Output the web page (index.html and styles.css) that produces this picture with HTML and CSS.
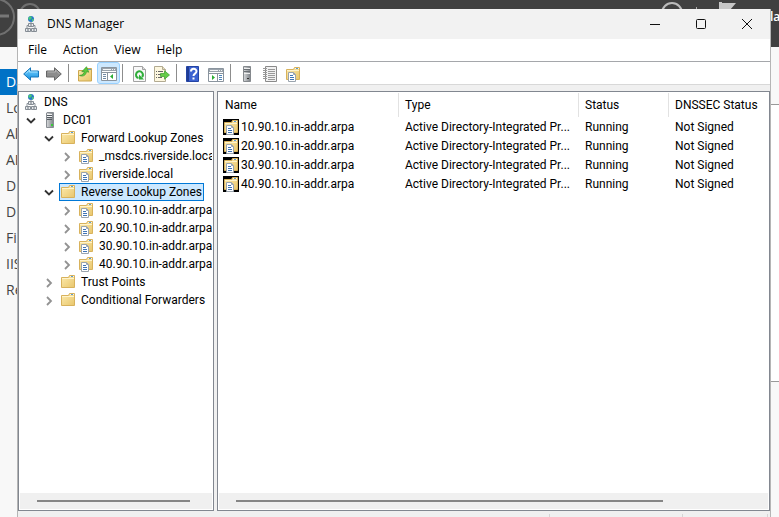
FILE: index.html
```html
<!DOCTYPE html>
<html lang="en">
<head>
<meta charset="utf-8">
<title>DNS Manager</title>
<link rel="stylesheet" href="styles.css">
</head>
<body>
<svg class="sprite" aria-hidden="true">
  <defs>
    <linearGradient id="gold" x1="0" y1="0" x2="1" y2="1"><stop offset="0" stop-color="#fdebae"/><stop offset="1" stop-color="#e8c66c"/></linearGradient>
    <linearGradient id="blue" x1="0" y1="0" x2="0" y2="1"><stop offset="0" stop-color="#7fd4ff"/><stop offset="1" stop-color="#1490e0"/></linearGradient>
    <linearGradient id="steel" x1="0" y1="0" x2="1" y2="0"><stop offset="0" stop-color="#d8dadc"/><stop offset="1" stop-color="#7b8085"/></linearGradient>
  </defs>
  <symbol id="dns" viewBox="0 0 16 16">
    <path d="M8 6v3M4 12V9.500h8V12" fill="none" stroke="#8b939b"/>
    <circle cx="8" cy="3" r="3" fill="#2878c8"/><path d="M6 1l2-1 1 2-2 2-2-1zM9 3l2 0-1 2-1 1z" fill="#48c878"/>
    <path d="M5.500 7.500h5v3h-5zM2.500 12.500h5v3h-5zM8.500 12.500h5v3h-5z" fill="#e6e9ec" stroke="#858c94"/>
    <path d="M7 9h2M4 14h2M10 14h2" stroke="#6c747c"/>
  </symbol>
  <symbol id="server" viewBox="0 0 16 16">
    <path d="M5 .5h6.500v15H4.500V1z" fill="url(#steel)" stroke="#888d92"/>
    <path d="M5 3.500h5M5 5.500h5M5 7.500h5" stroke="#555b61"/><path d="M5 2.500h5M5 4.500h5" stroke="#f4f5f6"/>
    <path d="M9 12h2v2H9z" fill="#38cc38"/>
  </symbol>
  <symbol id="server-off" viewBox="0 0 16 16">
    <path d="M4.500.5h7v15h-7z" fill="url(#steel)" stroke="#85898d"/>
    <path d="M5 3.500h6M5 5.500h6" stroke="#6a6f74"/><path d="M5 2.500h6M5 7.500h6" stroke="#eee"/><path d="M8 12h2v1H8z" fill="#333"/>
  </symbol>
  <symbol id="folder" viewBox="0 0 16 16">
    <path d="M1.500 3.500h7l1-2h5v12h-13z" fill="url(#gold)" stroke="#d8b25c"/>
    <path d="M10 2.500h4" stroke="#fff8df"/><path d="M11 2.500h2" stroke="#5b9bd5"/><path d="M2 4.500h12" stroke="#fff4cc"/>
  </symbol>
  <symbol id="zone" viewBox="0 0 16 16">
    <path d="M1.500 3.500h7l1-2h5v12h-13z" fill="url(#gold)" stroke="#d8b25c"/>
    <path d="M10 2.500h4" stroke="#fff8df"/><path d="M11 2.500h2" stroke="#5b9bd5"/><path d="M2 4.500h12" stroke="#fff4cc"/>
    <path d="M3.500 6.500h5l2 2v7h-7z" fill="#fff" stroke="#9aa4ae"/><path d="M8.500 6.500v2h2" fill="none" stroke="#9aa4ae"/>
    <path d="M5 9.500h3M5 11.500h4M5 13.500h4" stroke="#3f74b5"/>
  </symbol>
  <symbol id="arrow-left" viewBox="0 0 16 16"><path d="M.7 8L7.500 1.800V5h8v6h-8v3.200z" fill="url(#blue)" stroke="#1777bb"/><path d="M3 7.500L6.500 4v2h8" fill="none" stroke="#a5e2ff"/></symbol>
  <symbol id="arrow-right" viewBox="0 0 16 16"><path d="M15.300 8L8.500 1.800V5h-8v6h8v3.200z" fill="#8d8d8d" stroke="#666"/><path d="M1.500 6h8V4l4 4" fill="none" stroke="#b3b3b3"/></symbol>
  <symbol id="folder-up" viewBox="0 0 16 16">
    <path d="M1.500 4.500h6l1-2h6v12.500h-13z" fill="url(#gold)" stroke="#cda64d"/><path d="M11 3.500h3" stroke="#5b9bd5"/>
    <path d="M2.500 9.500C6 9 7 7.500 7.300 5.300L4.800 5.800 9.500.7l2.200 5.500-2.200-.6C9 9 6.500 11 2.500 9.500z" fill="#5bcc3d" stroke="#36962a" stroke-width=".7"/>
  </symbol>
  <symbol id="tree-pane" viewBox="0 0 16 16">
    <path d="M.5 1.500h15v13H.5z" fill="#fff" stroke="#8a949e"/><path d="M1 2h14v3H1z" fill="#9aa3ac"/><path d="M2 3.500h8M11 3.500h1M13 3.500h1" stroke="#f5f7f8"/>
    <path d="M1 6.500h14M6.500 7v7" stroke="#8a949e"/><path d="M2 8.500h3M2 10.500h3M2 12.500h3" stroke="#718ba5"/><path d="M12 8v5L9 10.500z" fill="#2cae35"/>
  </symbol>
  <symbol id="action-pane" viewBox="0 0 16 16">
    <path d="M.5 2.500h15v13H.5z" fill="#fff" stroke="#8a949e"/><path d="M1 3h14v3H1z" fill="#9aa3ac"/><path d="M2 4.500h8M11 4.500h1M13 4.500h1" stroke="#f5f7f8"/>
    <path d="M1 7.500h14M9.500 8v7" stroke="#8a949e"/><path d="M11 9.500h3M11 11.500h3M11 13.500h3" stroke="#4d83b7"/><path d="M4 9v5l3-2.500z" fill="#2cae35"/>
  </symbol>
  <symbol id="refresh" viewBox="0 0 16 16">
    <path d="M2.500.5h9l3 3v12h-12z" fill="#f8f8f8" stroke="#a2a2a2"/><path d="M11.500.5v3h3" fill="#ddd" stroke="#a2a2a2"/>
    <path d="M7.500 12C5 11.500 4.500 9 5.500 7s4-2.500 5.500-.5 1 3.500 0 4.500" fill="none" stroke="#2fae3a" stroke-width="2"/><path d="M8 8.500v5h5z" fill="#2fae3a"/>
  </symbol>
  <symbol id="export" viewBox="0 0 16 16">
    <path d="M.5.5h8l3 3v12H.5z" fill="#fdf7df" stroke="#b2aa91"/><path d="M8.500.5v3h3" fill="#e8dfbd" stroke="#b2aa91"/>
    <path d="M2 5.500h1M2 8.500h1M2 11.500h1M4 5.500h5M4 8.500h3M4 11.500h4" stroke="#666"/>
    <path d="M6.500 7.500h4V4.800L15.500 9l-5 4.200v-2.700h-4z" fill="#65cc46" stroke="#3a9e2c" stroke-width=".7"/>
  </symbol>
  <symbol id="help" viewBox="0 0 16 16">
    <path d="M1.500.5h12v15h-12z" fill="#3c62d0" stroke="#2444a4"/><path d="M2 1h2v14H2z" fill="#203c94"/>
    <path d="M6 5.500C6 2 11.500 2 11.500 5.300c0 2.400-3 2.200-3 4.700" fill="none" stroke="#fff" stroke-width="2"/><path d="M7.500 11.500h2v2h-2z" fill="#fff"/>
  </symbol>
  <symbol id="log" viewBox="0 0 16 16">
    <path d="M3.500.5h11v15h-11z" fill="#f1f1f1" stroke="#8a8a8a"/><path d="M1 2.500h4M1 4.500h4M1 6.500h4M1 8.500h4M1 10.500h4M1 12.500h4" stroke="#999"/>
    <path d="M6 3.500h7M6 5.500h7M6 7.500h7M6 9.500h7M6 11.500h7M6 13.500h7" stroke="#999"/>
  </symbol>
  <symbol id="open" viewBox="0 0 16 16"><path d="M4 6.500l4 4 4-4" fill="none" stroke="#333" stroke-width="1.800"/></symbol>
  <symbol id="closed" viewBox="0 0 16 16"><path d="M6 5l4 4-4 4" fill="none" stroke="#929292" stroke-width="1.800"/></symbol>
</svg>

<div class="backdrop">
  <header class="banner">
    <svg class="nav-circles" viewBox="0 0 46 47" aria-hidden="true"><g fill="none" stroke="#707070" stroke-width="2"><circle cx="-4" cy="17" r="18"/><circle cx="30" cy="14" r="10"/></g><path d="M0 16h9" stroke="#777" stroke-width="3"/></svg>
    <svg class="flag" viewBox="0 0 80 47" aria-hidden="true"><circle cx="12" cy="13" r="10" fill="none" stroke="#bbb" stroke-width="2"/><path d="M36.500 7v3" stroke="#aaa"/><path d="M59 2h3v1h14l-6 7H59z" fill="#c6c6c6"/></svg>
    <span class="banner-menu">la</span>
  </header>
  <div class="console">
    <nav class="sidebar">
      <a class="side current" href="#">Da</a><a class="side" href="#">Lo</a><a class="side" href="#">All</a><a class="side" href="#">AD</a><a class="side" href="#">DH</a><a class="side" href="#">DN</a><a class="side" href="#">File</a><a class="side" href="#">IIS</a><a class="side" href="#">Re</a>
    </nav>
    <div class="card"></div>
  </div>
</div>

<main class="window">
  <header class="titlebar">
    <svg class="icon"><use href="#dns"/></svg>
    <h1>DNS Manager</h1>
    <button class="caption" aria-label="Minimize"><svg class="glyph" viewBox="0 0 12 12"><path d="M1 6.500h10"/></svg></button>
    <button class="caption" aria-label="Maximize"><svg class="glyph" viewBox="0 0 12 12"><rect x="1.500" y="1.500" width="9" height="9" rx="1"/></svg></button>
    <button class="caption" aria-label="Close"><svg class="glyph" viewBox="0 0 12 12"><path d="M1 1l10 10M11 1L1 11"/></svg></button>
  </header>
  <nav class="menubar"><button>File</button><button>Action</button><button>View</button><button>Help</button></nav>
  <div class="toolbar">
    <button aria-label="Back"><svg class="icon"><use href="#arrow-left"/></svg></button>
    <button aria-label="Forward"><svg class="icon"><use href="#arrow-right"/></svg></button>
    <span class="sep"></span>
    <button aria-label="Up one level"><svg class="icon"><use href="#folder-up"/></svg></button>
    <button class="pressed" aria-label="Console tree"><svg class="icon"><use href="#tree-pane"/></svg></button>
    <span class="sep"></span>
    <button aria-label="Refresh"><svg class="icon"><use href="#refresh"/></svg></button>
    <button aria-label="Export list"><svg class="icon"><use href="#export"/></svg></button>
    <span class="sep"></span>
    <button aria-label="Help"><svg class="icon"><use href="#help"/></svg></button>
    <button aria-label="Action pane"><svg class="icon"><use href="#action-pane"/></svg></button>
    <span class="sep"></span>
    <button aria-label="New server"><svg class="icon"><use href="#server-off"/></svg></button>
    <button aria-label="Event log"><svg class="icon"><use href="#log"/></svg></button>
    <button aria-label="New zone"><svg class="icon"><use href="#zone"/></svg></button>
  </div>
  <div class="panes">
    <section class="pane">
      <ul class="tree">
        <li class="node root"><svg class="icon"><use href="#dns"/></svg><span>DNS</span></li>
        <li class="node l1"><svg class="icon"><use href="#open"/></svg><svg class="icon"><use href="#server"/></svg><span>DC01</span></li>
        <li class="node l2"><svg class="icon"><use href="#open"/></svg><svg class="icon"><use href="#folder"/></svg><span>Forward Lookup Zones</span></li>
        <li class="node l3"><svg class="icon"><use href="#closed"/></svg><svg class="icon"><use href="#zone"/></svg><span>_msdcs.riverside.loca</span></li>
        <li class="node l3"><svg class="icon"><use href="#closed"/></svg><svg class="icon"><use href="#zone"/></svg><span>riverside.local</span></li>
        <li class="node l2"><svg class="icon"><use href="#open"/></svg><div class="selected"><svg class="icon"><use href="#folder"/></svg><span>Reverse Lookup Zones</span></div></li>
        <li class="node l3"><svg class="icon"><use href="#closed"/></svg><svg class="icon"><use href="#zone"/></svg><span>10.90.10.in-addr.arpa</span></li>
        <li class="node l3"><svg class="icon"><use href="#closed"/></svg><svg class="icon"><use href="#zone"/></svg><span>20.90.10.in-addr.arpa</span></li>
        <li class="node l3"><svg class="icon"><use href="#closed"/></svg><svg class="icon"><use href="#zone"/></svg><span>30.90.10.in-addr.arpa</span></li>
        <li class="node l3"><svg class="icon"><use href="#closed"/></svg><svg class="icon"><use href="#zone"/></svg><span>40.90.10.in-addr.arpa</span></li>
        <li class="node l2"><svg class="icon"><use href="#closed"/></svg><svg class="icon"><use href="#folder"/></svg><span>Trust Points</span></li>
        <li class="node l2"><svg class="icon"><use href="#closed"/></svg><svg class="icon"><use href="#folder"/></svg><span>Conditional Forwarders</span></li>
      </ul>
      <div class="scroll"><div class="thumb tree-thumb"></div></div>
    </section>
    <section class="pane">
      <div class="content">
        <table>
          <colgroup><col class="first"><col class="wide"><col class="narrow"><col></colgroup>
          <thead><tr><th>Name</th><th>Type</th><th>Status</th><th>DNSSEC Status</th></tr></thead>
          <tbody>
            <tr><td><div class="name"><svg class="icon"><use href="#zone"/></svg>10.90.10.in-addr.arpa</div></td><td>Active Directory-Integrated Pr...</td><td>Running</td><td>Not Signed</td></tr>
            <tr><td><div class="name"><svg class="icon"><use href="#zone"/></svg>20.90.10.in-addr.arpa</div></td><td>Active Directory-Integrated Pr...</td><td>Running</td><td>Not Signed</td></tr>
            <tr><td><div class="name"><svg class="icon"><use href="#zone"/></svg>30.90.10.in-addr.arpa</div></td><td>Active Directory-Integrated Pr...</td><td>Running</td><td>Not Signed</td></tr>
            <tr><td><div class="name"><svg class="icon"><use href="#zone"/></svg>40.90.10.in-addr.arpa</div></td><td>Active Directory-Integrated Pr...</td><td>Running</td><td>Not Signed</td></tr>
          </tbody>
        </table>
      </div>
      <div class="scroll"><div class="thumb list-thumb"></div></div>
    </section>
  </div>
  <footer class="status"><span></span><span></span><span></span></footer>
</main>
</body>
</html>
```

FILE: styles.css
```css
* { box-sizing: border-box; }

body {
  margin: 0;
  height: 100vh;
  overflow: hidden;
  position: relative;
  background: #f8f8f8;
  color: #000;
  font: 12px/18px "Open Sans", "Noto Sans", sans-serif;
}

button { border: 0; padding: 0; background: none; color: inherit; font: inherit; }
.sprite { position: absolute; width: 0; height: 0; }
.icon { width: 16px; height: 16px; flex: none; display: block; }

/* Server console behind the window */
.backdrop { height: 100%; display: flex; flex-direction: column; }
.banner { height: 47px; flex: none; display: flex; background: #404040; color: #fff; overflow: hidden; }
.nav-circles { width: 46px; height: 47px; }
.flag { width: 80px; height: 47px; margin-left: auto; }
.banner-menu { width: 39px; padding: 8px 0 0 30px; font-size: 12px; font-weight: 600; }
.console { flex: 1; display: flex; justify-content: space-between; }
.sidebar { width: 60px; padding-top: 22px; }
.side { display: block; height: 26px; padding-left: 6px; color: #444; font-size: 14px; line-height: 26px; text-decoration: none; }
.side.current { background: #0072c6; color: #fff; }
.card { width: 30px; height: 278px; margin-top: 57px; background: #fff; border: solid #999; border-width: 1px 0; }

/* Window */
.window {
  position: absolute;
  inset: 9px 8px 0 17px;
  display: flex;
  flex-direction: column;
  background: #f0f0f0;
  border: solid #b5b5b5;
  border-width: 0 1px;
}
.titlebar { height: 30px; flex: none; display: flex; align-items: center; padding-left: 5px; background: #f2f2f2; }
.titlebar h1 { margin: 0 auto 0 8px; font-size: 12px; font-weight: 400; }
.caption { width: 46px; height: 30px; display: flex; align-items: center; justify-content: center; }
.glyph { width: 12px; height: 12px; fill: none; stroke: #111; }
.menubar { height: 23px; flex: none; display: flex; gap: 16px; padding: 0 10px; background: #fff; border-bottom: 1px solid #a5a7ab; }
.toolbar { height: 23px; flex: none; display: flex; align-items: center; padding-left: 2px; background: #fff; border-bottom: 1px solid #d8d8d8; }
.toolbar button { width: 23px; height: 22px; display: flex; align-items: center; padding: 2px 0 0 3px; }
.toolbar .pressed { padding: 1px 0 0 3px; background: #cce8ff; border: 1px solid #99d1ff; border-radius: 3px; }
.sep { width: 8px; height: 18px; padding-left: 2px; }
.sep::before { content: ""; display: block; width: 1px; height: 100%; background: #8d8d8d; }

.panes { flex: 1; min-height: 0; display: grid; grid-template-columns: 196px minmax(0, 1fr); gap: 3px; padding-top: 6px; }
.pane { display: flex; flex-direction: column; min-width: 0; padding: 1px; background: #fff; border: 1px solid #828790; overflow: hidden; font-family: Roboto, "Open Sans", sans-serif; }
.tree { flex: 1; margin: 0; padding: 0; list-style: none; overflow: hidden; }
.node { display: flex; align-items: center; height: 18px; white-space: nowrap; }
.node span { margin-left: 5px; }
.root, .l1 { padding-left: 3px; }
.l2 { padding-left: 21px; }
.l3 { padding-left: 39px; }
.node > .icon:first-child:not(:only-of-type), .l2 > .icon:first-child { margin-right: 3px; }
.selected { display: flex; align-items: center; height: 18px; margin-left: -1px; padding-right: 1px; background: #cce8ff; border: 1px solid #0078d7; }

.content { flex: 1; overflow: hidden; }
table { width: 100%; table-layout: fixed; border-collapse: separate; border-spacing: 0; }
.first, .wide { width: 180px; }
.narrow { width: 90px; }
th, td { height: 19px; padding: 0 0 0 6px; font-weight: 400; text-align: left; white-space: nowrap; }
th { height: 24px; border-right: 1px solid #e2e2e2; }
th:last-child { border-right: 0; }
td:first-child { padding-left: 4px; }
.name { display: flex; align-items: center; gap: 2px; }
.name .icon { background: #000; }

.scroll { height: 16px; flex: none; display: flex; align-items: center; padding: 0 17px; background: #f0f0f0; }
.thumb { height: 2px; background: #868686; }
.tree-thumb { width: 97%; }
.list-thumb { width: 83%; }
.status { height: 5px; flex: none; display: flex; justify-content: flex-end; margin-top: 1px; padding: 2px 2px 0 0; }
.status span { border-right: 1px solid #d5d5d5; width: 85px; }
.status span:first-child { width: 100px; }
.status span:nth-child(2) { width: 133px; }
```
